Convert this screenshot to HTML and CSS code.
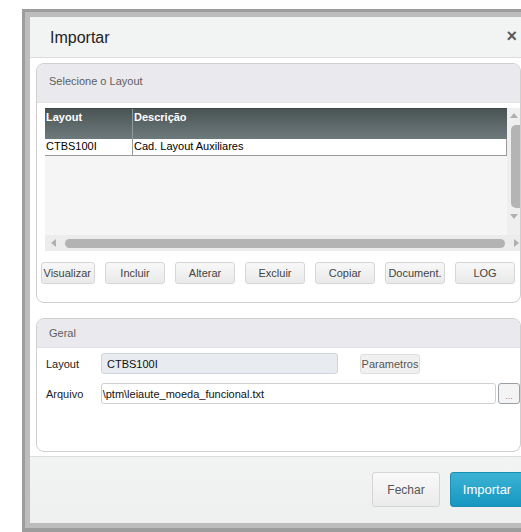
FILE: index.html
```html
<!DOCTYPE html>
<html lang="pt">
<head>
<meta charset="utf-8">
<title>Importar</title>
<link rel="stylesheet" href="styles.css">
</head>
<body>
<div class="frame">
  <div class="frame-inner">
    <div class="dialog">
      <div class="dlg-head">
        <span class="dlg-title">Importar</span>
        <span class="dlg-close">×</span>
      </div>
      <div class="dlg-body">
        <section class="panel panel-layout">
          <div class="panel-head">Selecione o Layout</div>
          <div class="grid">
            <div class="grid-main">
              <div class="g-row g-header">
                <div class="g-cell c-layout">Layout</div>
                <div class="g-cell c-desc">Descrição</div>
              </div>
              <div class="g-row g-data">
                <div class="g-cell c-layout">CTBS100I</div>
                <div class="g-cell c-desc">Cad. Layout Auxiliares</div>
              </div>
            </div>
            <div class="vscroll">
              <span class="arr arr-up"></span>
              <span class="vthumb"></span>
              <span class="arr arr-down"></span>
            </div>
            <div class="hscroll">
              <span class="arr arr-left"></span>
              <span class="hthumb"></span>
              <span class="arr arr-right"></span>
            </div>
          </div>
          <div class="actions">
            <button class="btn btn-first"><span>Visualizar</span></button>
            <button class="btn">Incluir</button>
            <button class="btn">Alterar</button>
            <button class="btn">Excluir</button>
            <button class="btn">Copiar</button>
            <button class="btn">Document.</button>
            <button class="btn">LOG</button>
          </div>
        </section>
        <section class="panel panel-geral">
          <div class="panel-head panel-head-sm">Geral</div>
          <div class="form">
            <div class="f-row">
              <label class="f-label">Layout</label>
              <div class="f-input f-disabled">CTBS100I</div>
              <button class="btn btn-param">Parametros</button>
            </div>
            <div class="f-row">
              <label class="f-label">Arquivo</label>
              <div class="f-input f-file">\ptm\leiaute_moeda_funcional.txt</div>
              <button class="btn-dots">...</button>
            </div>
          </div>
        </section>
      </div>
      <div class="dlg-foot">
        <button class="fbtn fbtn-close">Fechar</button>
        <button class="fbtn fbtn-primary">Importar</button>
      </div>
    </div>
  </div>
</div>
</body>
</html>
```
FILE: styles.css
```css
html, body {
  margin: 0;
  padding: 0;
  overflow: hidden;
  background: #ffffff;
  font-family: "Liberation Sans", Arial, sans-serif;
}

/* desktop shadow frame around the modal */
.frame {
  margin: 9px 0 0 22px;
  padding: 3px 0 10px 3px;
  background: #9d9d9d;
  width: 520px;
}
.frame-inner {
  padding: 5px 0 5px 5px;
  background: #bdbdbd;
}

.dialog {
  width: 497px;
  height: 506px;
  background: #ffffff;
  display: flex;
  flex-direction: column;
}

/* title bar */
.dlg-head {
  flex: none;
  background: #f2f3f3;
  border-bottom: 1px solid #dcdcdc;
  display: flex;
  align-items: center;
  justify-content: space-between;
  padding: 2px 10px 0 20px;
  box-sizing: border-box;
  height: 41px;
}
.dlg-title {
  font-size: 16px;
  color: #222;
}
.dlg-close {
  font-size: 18px;
  font-weight: bold;
  color: #5a5a5a;
  margin-top: -3px;
}

.dlg-body {
  flex: 1;
  padding: 5px 0 0 6px;
}

/* fieldset-like panels */
.panel {
  width: 485px;
  box-sizing: border-box;
  border: 1px solid #cfcfcf;
  border-radius: 8px;
  overflow: hidden;
}
.panel-layout { height: 240px; }
.panel-geral { height: 134px; margin-top: 15px; }

.panel-head {
  background: #e9e9ee;
  border-bottom: 1px solid #e2e2e6;
  font-size: 11px;
  color: #5e5e5e;
  padding-left: 12px;
  display: flex;
  align-items: center;
  padding-bottom: 4px;
  box-sizing: border-box;
  height: 39px;
}
.panel-head-sm {
  height: 29px;
  padding-bottom: 0;
}

/* browse grid */
.grid {
  margin: 5px 0 0 8px;
  display: grid;
  grid-template-columns: 462px 14px;
  grid-template-rows: 127px 16px;
}
.grid-main {
  background: #f5f5f5;
}
.g-row {
  display: flex;
  font-size: 11px;
}
.g-cell { box-sizing: border-box; padding-left: 1px; white-space: nowrap; }
.c-layout { width: 88px; }
.c-desc { flex: 1; }
.g-header {
  height: 30px;
  background: linear-gradient(#4a5455, #6d7a7b);
  color: #ffffff;
  font-weight: bold;
  border-top: 1px solid #3f4849;
}
.g-header .g-cell { padding-top: 2px; }
.g-header .c-layout { border-right: 1px solid #8e9a9b; }
.g-data {
  height: 16px;
  background: #ffffff;
  color: #000;
  border-bottom: 1px solid #9a9a9a;
  border-right: 1px solid #9a9a9a;
  line-height: 15px;
}
.g-data .c-layout { border-right: 1px solid #9a9a9a; }

.vscroll {
  background: #efefef;
  display: flex;
  flex-direction: column;
  align-items: center;
}
.vthumb {
  align-self: flex-end;
  width: 10px;
  height: 83px;
  margin-top: 7px;
  background: #b4b4b4;
  border-radius: 5px 0 0 5px;
}
.hscroll {
  grid-column: 1 / span 2;
  background: #ececec;
  display: flex;
  align-items: center;
}
.hthumb {
  width: 440px;
  height: 9px;
  margin-left: 9px;
  background: #b3b3b3;
  border-radius: 5px;
}

.arr { width: 0; height: 0; display: block; }
.arr-up {
  margin-top: 5px;
  border-left: 4px solid transparent;
  border-right: 4px solid transparent;
  border-bottom: 5px solid #b0b0b0;
}
.arr-down {
  margin-top: 6px;
  border-left: 4px solid transparent;
  border-right: 4px solid transparent;
  border-top: 5px solid #b0b0b0;
}
.arr-left {
  margin-left: 6px;
  border-top: 4px solid transparent;
  border-bottom: 4px solid transparent;
  border-right: 5px solid #b0b0b0;
}
.arr-right {
  margin-left: 9px;
  border-top: 4px solid transparent;
  border-bottom: 4px solid transparent;
  border-left: 5px solid #b0b0b0;
}

/* button bar */
.actions {
  display: flex;
  gap: 10px;
  margin: 11px 0 0 4px;
}
.btn {
  width: 60px;
  height: 22px;
  box-sizing: border-box;
  padding: 0;
  font-family: "Liberation Sans", Arial, sans-serif;
  font-size: 11px;
  color: #444;
  background: linear-gradient(#f8f8f8, #e9e9e9);
  border: 1px solid #d6d6d6;
  border-radius: 3px;
  white-space: nowrap;
}
.btn-first {
  width: 54px;
  overflow: hidden;
  display: flex;
  align-items: center;
  justify-content: flex-end;
  padding-right: 3px;
}

/* form rows */
.form {
  padding: 5px 0 0 9px;
}
.f-row {
  display: flex;
  align-items: center;
  height: 21px;
  margin-bottom: 9px;
}
.f-label {
  width: 55px;
  font-size: 11px;
  color: #222;
}
.f-input {
  height: 21px;
  box-sizing: border-box;
  font-size: 11px;
  color: #111;
  display: flex;
  align-items: center;
  border-radius: 3px;
}
.f-disabled {
  width: 237px;
  background: #e8ebef;
  border: 1px solid #d0d3d8;
  padding-left: 5px;
}
.f-file {
  width: 398px;
  background: #fff;
  border: 1px solid #cfcfcf;
  padding-left: 1px;
}
.btn-param {
  width: 60px;
  height: 20px;
  margin-left: 22px;
  color: #555;
  background: #f0f0f0;
  border-color: #dedede;
}
.btn-dots {
  width: 22px;
  height: 21px;
  margin-left: 2px;
  box-sizing: border-box;
  border: 1px solid #9aa0a8;
  border-radius: 3px;
  background: #f4f4f4;
  font-size: 9px;
  color: #a07ab4;
  padding: 4px 0 0;
  font-family: "Liberation Sans", Arial, sans-serif;
}

/* footer */
.dlg-foot {
  height: 67px;
  flex: none;
  box-sizing: border-box;
  border-top: 1px solid #dcdcdc;
  background: linear-gradient(#f2f3f3, #eeefef);
  display: flex;
  align-items: flex-start;
  justify-content: flex-end;
  padding: 15px 3px 0 0;
  gap: 10px;
}
.fbtn {
  height: 35px;
  box-sizing: border-box;
  border-radius: 3px;
  font-family: "Liberation Sans", Arial, sans-serif;
  padding: 0;
}
.fbtn-close {
  width: 68px;
  font-size: 12px;
  color: #555;
  background: linear-gradient(#f9f9f9, #ebebeb);
  border: 1px solid #d5d5d5;
}
.fbtn-primary {
  width: 74px;
  font-size: 13px;
  color: #fff;
  background: linear-gradient(#3db3d3, #1597c2);
  border: 1px solid #1a8fb5;
}
```
